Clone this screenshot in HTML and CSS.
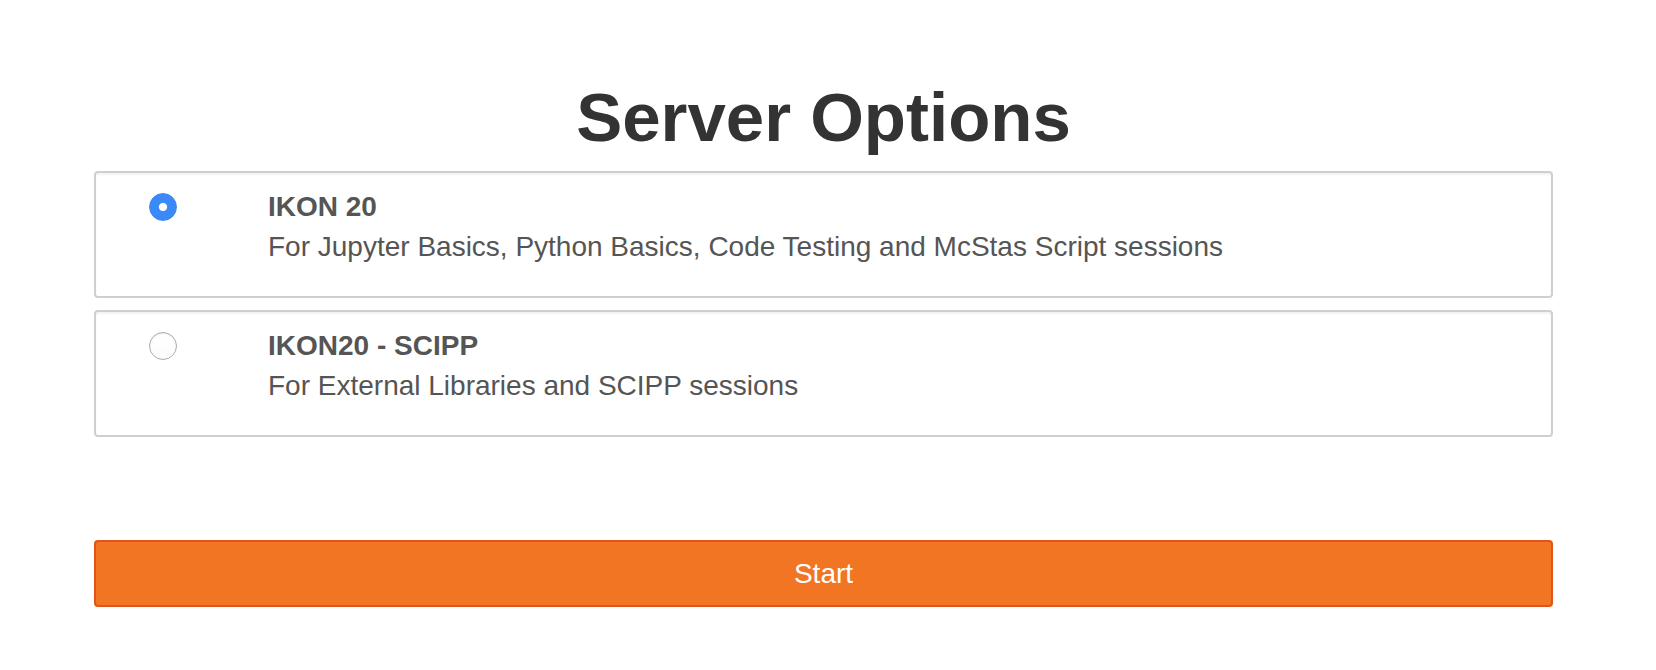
FILE: index.html
```html
<!DOCTYPE html>
<html lang="en">
<head>
<meta charset="utf-8">
<title>Server Options</title>
<link rel="stylesheet" href="styles.css">
</head>
<body>
<form class="page">
  <h1 class="page-title">Server Options</h1>
  <div class="options">
    <label class="option">
      <input class="radio" type="radio" name="profile" value="ikon20" checked>
      <span class="option-text">
        <strong class="option-name">IKON 20</strong>
        <span class="option-desc">For Jupyter Basics, Python Basics, Code Testing and McStas Script sessions</span>
      </span>
    </label>
    <label class="option">
      <input class="radio" type="radio" name="profile" value="ikon20-scipp">
      <span class="option-text">
        <strong class="option-name">IKON20 - SCIPP</strong>
        <span class="option-desc">For External Libraries and SCIPP sessions</span>
      </span>
    </label>
  </div>
  <button class="start-btn" type="button">Start</button>
</form>
</body>
</html>
```

FILE: styles.css
```css
html, body {
  margin: 0;
  padding: 0;
  background: #ffffff;
}

body {
  font-family: "Liberation Sans", Arial, Helvetica, sans-serif;
  color: #555555;
  font-size: 28px;
  line-height: 40px;
}

.page {
  display: flex;
  flex-direction: column;
  padding: 79px 103px 0 94px;
}

.page-title {
  margin: 0 0 15px;
  font-size: 69px;
  line-height: 77px;
  font-weight: bold;
  color: #333333;
  text-align: center;
}

.options {
  display: flex;
  flex-direction: column;
  gap: 12px;
}

.option {
  display: flex;
  align-items: flex-start;
  gap: 91px;
  padding: 14px 20px 29px 53px;
  border: 2px solid #cfcfcf;
  border-radius: 4px;
  box-shadow: inset 0 2px 2px rgba(0, 0, 0, 0.05);
  cursor: pointer;
}

.radio {
  -webkit-appearance: none;
  appearance: none;
  flex: none;
  width: 28px;
  height: 28px;
  margin: 6px 0 0;
  border-radius: 50%;
  border: 1px solid #acacac;
  background: linear-gradient(#ffffff, #fbfbfb);
  box-shadow: inset 0 1px 1px rgba(0, 0, 0, 0.08);
}

.radio:checked {
  border-color: #3b88f7;
  background: radial-gradient(circle, #ffffff 0, #ffffff 3.6px, #3b88f7 4.6px);
  box-shadow: none;
}

.option-text {
  display: flex;
  flex-direction: column;
}

.option-name {
  font-weight: bold;
  color: #555555;
}

.option-desc {
  color: #555555;
}

.start-btn {
  margin-top: 103px;
  height: 67px;
  border: 2px solid #e2531d;
  border-radius: 4px;
  background: #f27524;
  color: #ffffff;
  font-family: "Liberation Sans", Arial, Helvetica, sans-serif;
  font-size: 28px;
  line-height: 40px;
  padding: 0;
  cursor: pointer;
}
```
